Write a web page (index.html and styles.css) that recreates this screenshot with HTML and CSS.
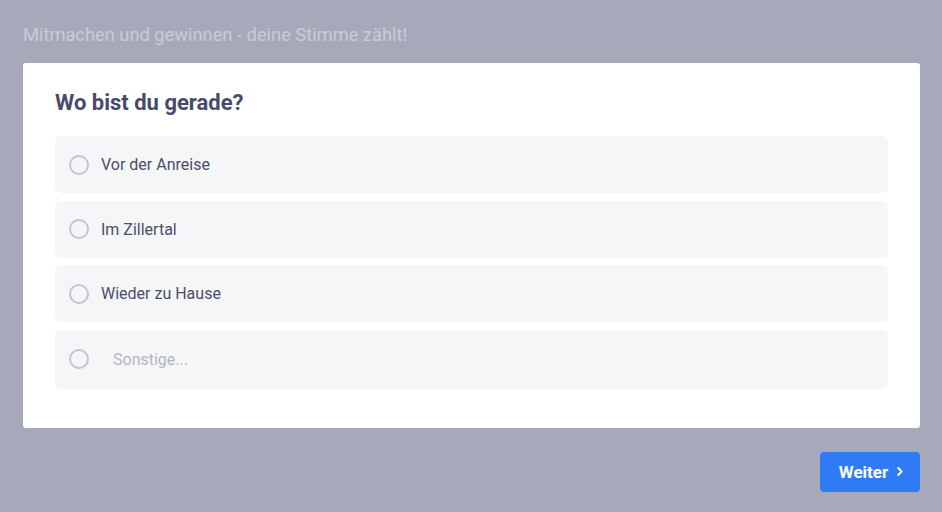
FILE: index.html
```html
<!DOCTYPE html>
<html lang="de">
<head>
<meta charset="utf-8">
<link rel="stylesheet" href="styles.css">
</head>
<body>
<div class="page">
  <p class="subtitle">Mitmachen und gewinnen - deine Stimme zählt!</p>
  <div class="card">
    <h1 class="question">Wo bist du gerade?</h1>
    <div class="options">
      <label class="option"><span class="radio"></span><span class="label">Vor der Anreise</span></label>
      <label class="option"><span class="radio"></span><span class="label">Im Zillertal</span></label>
      <label class="option"><span class="radio"></span><span class="label">Wieder zu Hause</span></label>
      <label class="option option-other"><span class="radio"></span><input class="other-input" type="text" placeholder="Sonstige..."></label>
    </div>
  </div>
  <div class="actions">
    <button class="next">Weiter <svg class="chev" width="6" height="9" viewBox="0 0 6 9"><path d="M1.2 1 L4.6 4.5 L1.2 8" fill="none" stroke="#fff" stroke-width="1.8" stroke-linecap="round" stroke-linejoin="round"/></svg></button>
  </div>
</div>
</body>
</html>
```
FILE: styles.css
```css
html, body {
  margin: 0;
  padding: 0;
  background: #a6a9ba;
  font-family: Roboto, "Noto Sans", sans-serif;
}
.page {
  padding: 23px 22px 0 23px;
}
.subtitle {
  margin: 0;
  font-size: 18.3px;
  line-height: 24px;
  color: #c9cbd7;
}
.card {
  margin-top: 16px;
  background: #fff;
  border-radius: 3px;
  padding: 27px 32px 39px 32px;
}
.question {
  margin: 0;
  font-size: 22px;
  line-height: 26px;
  font-weight: 700;
  color: #474b6a;
}
.options {
  margin-top: 20px;
  display: flex;
  flex-direction: column;
  gap: 7.5px;
}
.option {
  display: flex;
  align-items: center;
  height: 57px;
  padding: 0 14px;
  background: #f5f6f8;
  border-radius: 6px;
  box-sizing: border-box;
}
.option-other {
  height: 59px;
}
.radio {
  width: 20px;
  height: 20px;
  box-sizing: border-box;
  border: 2px solid #c2c4d2;
  border-radius: 50%;
  flex: none;
}
.label {
  margin-left: 12px;
  font-size: 16px;
  color: #4b4e68;
}
.other-input {
  margin-left: 24px;
  border: none;
  background: transparent;
  font-family: inherit;
  font-size: 16px;
  color: #4b4e68;
  outline: none;
  padding: 0;
  flex: 1;
}
.other-input::placeholder {
  color: #b3b5c3;
}
.actions {
  display: flex;
  justify-content: flex-end;
  margin-top: 24px;
}
.next {
  width: 100px;
  height: 40px;
  border: none;
  border-radius: 4px;
  background: #2f7bf6;
  color: #fff;
  font-family: inherit;
  font-size: 17px;
  font-weight: 700;
  cursor: pointer;
  display: flex;
  align-items: center;
  justify-content: center;
  gap: 9px;
  padding: 0 0 0 2px;
}
.chev {
  display: block;
}
```
